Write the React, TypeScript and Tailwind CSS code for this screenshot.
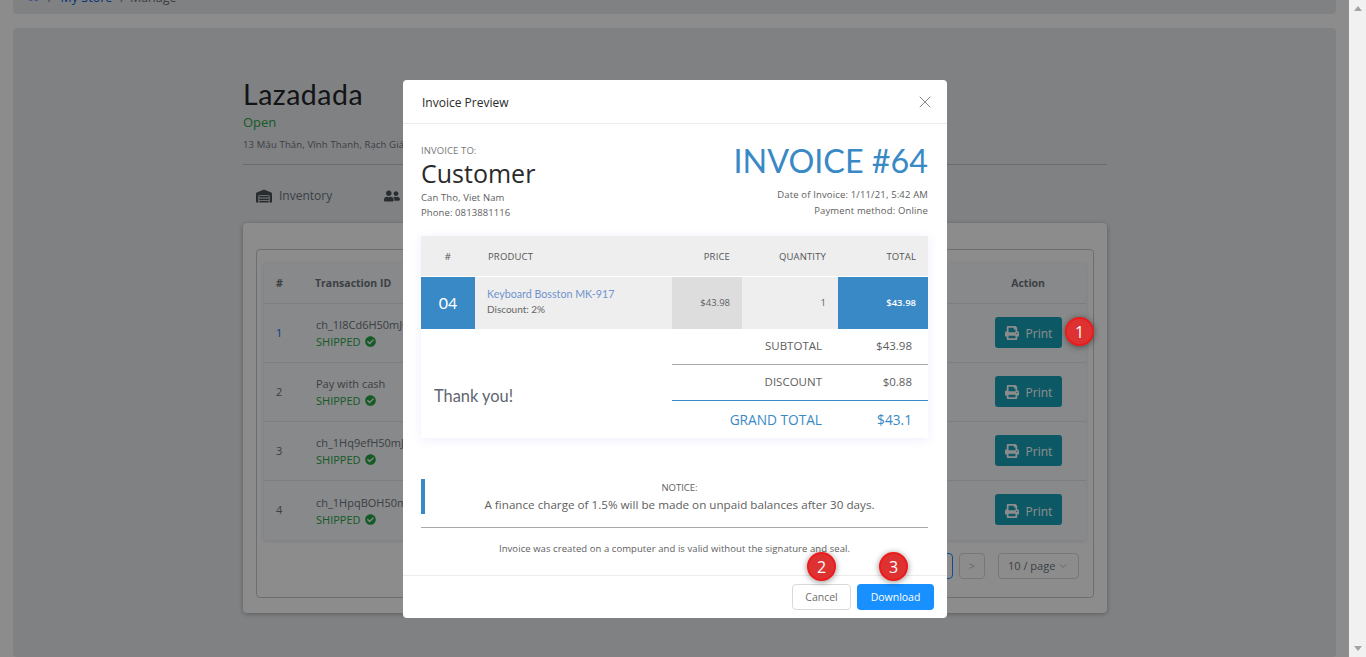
import { FaHome, FaPrint, FaUserFriends, FaWarehouse, FaCheckCircle } from 'react-icons/fa';
import { ChevronDown, X } from 'lucide-react';

const rows = [
  { id: 1, tx: 'ch_1I8Cd6H50mJ0', link: true },
  { id: 2, tx: 'Pay with cash', link: false },
  { id: 3, tx: 'ch_1Hq9efH50mJ0', link: false },
  { id: 4, tx: 'ch_1HpqBOH50mJ0', link: false },
];

function Marker({ n, className }: { n: number; className: string }) {
  return (
    <div
      className={`absolute z-30 flex h-[29px] w-[29px] items-center justify-center rounded-full border-2 border-[#ec1c1c] bg-[#de3232] font-['Open_Sans',sans-serif] text-base text-white shadow-[0_1px_6px_rgba(0,0,0,0.45)] ${className}`}
    >
      {n}
    </div>
  );
}

function StorePage() {
  return (
    <div className="flex h-full flex-col gap-[14px] overflow-hidden bg-white px-[13px]">
      <div className="-mt-[6px] flex h-[20px] shrink-0 items-end gap-[8px] rounded bg-[#e9ecef] pb-[6px] pl-[14px] text-[12.5px] text-[#0b5ed7]">
        <FaHome className="mb-[6px] text-[13px]" />
        <span className="text-[#6c757d]">/</span>
        <span>My Store</span>
        <span className="text-[#6c757d]">/</span>
        <span className="-ml-[3px] text-[#6c757d]">Manage</span>
      </div>

      <div className="flex-1 rounded bg-[#e9ecef] pl-[230px] pr-[229px] pt-[50px]">
        <h1 className="font-['Lato',sans-serif] text-[28.5px] leading-[32px] tracking-[0.5px] text-[#212529]">Lazadada</h1>
        <p className="mt-[3px] text-[13px] leading-[18px] text-[#28a745]">Open</p>
        <p className="mt-[7px] border-b border-[#c6c6c6] pb-[12px] text-[9.5px] leading-[14px] tracking-[0.15px] text-[#6c757d]">
          13 Mậu Thân, Vĩnh Thanh, Rạch Giá, Kiên Giang
        </p>

        <div className="flex h-[58px] items-center gap-[52px] pl-[13px] pt-[3px] text-[12px] text-[#6c757d]">
          <span className="flex items-center gap-[7px]">
            <FaWarehouse className="text-[16px] text-[#495057]" />
            Inventory
          </span>
          <span className="flex items-center gap-[7px]">
            <FaUserFriends className="text-[16px] text-[#495057]" />
            Staffs
          </span>
        </div>

        <div className="h-[390px] rounded-sm bg-white p-[13px] pt-[26px] shadow-[0_1px_5px_rgba(0,0,0,0.3)]">
          <div className="h-[349px] rounded-sm border border-[#c9c9c9] px-[7px] pt-[13px]">
            <div className="bg-[#f8f9fc] shadow-[0_1px_4px_rgba(60,60,160,0.15)]">
              <div className="flex h-[41px] items-center border-b border-[#e3e6f0] pl-[12px] pr-[41px] pt-[2px] text-[10.5px] font-bold text-[#6c757d]">
                <span className="w-[39px]">#</span>
                <span className="flex-1">Transaction ID</span>
                <span>Action</span>
              </div>
              {rows.map((row) => (
                <div
                  key={row.id}
                  className="flex h-[59px] items-center border-b border-[#e3e6f0] pl-[12px] pr-[24px] text-[11px] text-[#6c757d] last:border-b-0"
                >
                  <span className={`w-[40px] ${row.link ? 'text-[#0d6efd]' : ''}`}>{row.id}</span>
                  <div className="flex-1">
                    <p className="leading-[17px]">{row.tx}</p>
                    <p className="flex items-center gap-1 leading-[17px] text-[#28a745]">
                      SHIPPED <FaCheckCircle className="text-[11px]" />
                    </p>
                  </div>
                  <button className="mb-[2px] flex h-[31px] w-[67px] items-center justify-center gap-[7px] rounded-[3px] bg-[#17a2b8] pt-[4px] text-[12px] text-white">
                    <FaPrint className="-mt-[2px] text-[14px]" />
                    Print
                  </button>
                </div>
              ))}
            </div>
            <div className="mt-[13px] flex items-center justify-end gap-[6px] pr-[7px] text-[11px] text-[#6c757d]">
              <span className="h-[26px] w-[26px] rounded-sm border border-[#1890ff]" />
              <span className="flex h-[26px] w-[26px] items-center justify-center rounded-sm border border-[#d9d9d9] text-[#bfbfbf]">
                &gt;
              </span>
              <span className="ml-[7px] flex h-[26px] w-[81px] items-center justify-between rounded-sm border border-[#d9d9d9] px-[9px]">
                10 / page
                <ChevronDown size={12} className="text-[#bfbfbf]" />
              </span>
            </div>
          </div>
        </div>
      </div>
    </div>
  );
}

function InvoiceModal() {
  return (
    <div className="absolute left-[403px] top-[80px] z-20 flex h-[538px] w-[544px] flex-col rounded-sm bg-white text-[#5e5e5e]">
      <div className="flex h-[44px] shrink-0 items-center justify-between border-b border-[#ececec] pl-[19px] pr-[12px]">
        <span className="pt-[2px] text-[12px] font-medium text-[#2a2a2a]">Invoice Preview</span>
        <X size={20} strokeWidth={1.2} className="text-[#8c8c8c]" />
      </div>

      <div className="flex-1 pl-[18px] pr-[19px]">
        <div className="flex h-[112px] justify-between pt-[20px]">
          <div>
            <p className="text-[9.5px] leading-[13px] tracking-[0.1px] text-[#777]">INVOICE TO:</p>
            <p className="-mt-px text-[25px] leading-[34px] text-[#2a2a2a]">Customer</p>
            <p className="text-[9.5px] leading-[15px] tracking-[0.1px]">Can Tho, Viet Nam</p>
            <p className="text-[9.5px] leading-[15px] tracking-[0.1px]">Phone: 0813881116</p>
          </div>
          <div className="text-right">
            <p className="-mt-[5px] font-['Lato',sans-serif] text-[32.3px] leading-[44px] text-[#3989c6]">INVOICE #64</p>
            <p className="mt-[3px] text-[9.5px] leading-[17px] tracking-[0.15px]">Date of Invoice: 1/11/21, 5:42 AM</p>
            <p className="text-[9.5px] leading-[16px] tracking-[0.15px]">Payment method: Online</p>
          </div>
        </div>

        <div className="shadow-[0_2px_10px_rgba(90,90,240,0.1)]">
          <div className="flex h-[40px] items-center bg-[#eeeeee] pt-[3px] text-[9.5px] tracking-[0.15px] text-[#555]">
            <span className="w-[54px] text-center">#</span>
            <span className="w-[197px] pl-[13px]">PRODUCT</span>
            <span className="w-[70px] pr-[12px] text-right">PRICE</span>
            <span className="w-[96px] pr-[12px] text-right">QUANTITY</span>
            <span className="w-[90px] pr-[12px] text-right">TOTAL</span>
          </div>
          <div className="mt-px flex h-[52px] items-stretch bg-[#eeeeee] text-[9.5px]">
            <span className="flex w-[54px] items-center justify-center bg-[#3989c6] font-['Lato',sans-serif] text-[16px] text-white">
              04
            </span>
            <div className="flex w-[197px] flex-col justify-center pb-[3px] pl-[12px]">
              <span className="font-['Lato',sans-serif] text-[10.7px] leading-[16px] text-[#6e93cf]">Keyboard Bosston MK-917</span>
              <span className="font-['Lato',sans-serif] text-[10px] leading-[15px] text-[#666]">Discount: 2%</span>
            </div>
            <span className="flex w-[70px] items-center justify-end bg-[#dddddd] pr-[12px]">$43.98</span>
            <span className="flex w-[96px] items-center justify-end pr-[12px]">1</span>
            <span className="flex w-[90px] items-center justify-end bg-[#3989c6] pr-[12px] font-semibold text-white">$43.98</span>
          </div>
          <div className="flex h-[109px]">
            <div className="flex w-[251px] items-center pl-[13px] pt-[26px] font-['Lato',sans-serif] text-[16.4px] text-[#5e6570]">
              Thank you!
            </div>
            <div className="w-[256px] text-[11.5px]">
              <div className="flex h-[36px] items-center justify-end border-b border-[#aaaaaa] pb-px pr-[16px]">
                <span>SUBTOTAL</span>
                <span className="w-[90px] text-right">$43.98</span>
              </div>
              <div className="flex h-[36px] items-center justify-end border-b border-[#3989c6] pb-px pr-[16px]">
                <span>DISCOUNT</span>
                <span className="w-[90px] text-right">$0.88</span>
              </div>
              <div className="flex h-[37px] items-center justify-end pr-[16px] pt-[2px] text-[13.7px] text-[#3989c6]">
                <span>GRAND TOTAL</span>
                <span className="w-[90px] text-right">$43.1</span>
              </div>
            </div>
          </div>
        </div>

        <div className="mt-[41px] flex h-[35px] flex-col items-center border-l-4 border-[#3989c6] pl-[6px] pt-px">
          <p className="text-[9.5px] leading-[15px]">NOTICE:</p>
          <p className="mt-px text-[11.67px] leading-[18px]">A finance charge of 1.5% will be made on unpaid balances after 30 days.</p>
        </div>
        <div className="mt-[13px] border-t border-[#aaaaaa] pt-[14px] text-center text-[9.5px] leading-[14px] tracking-[0.07px]">
          Invoice was created on a computer and is valid without the signature and seal.
        </div>
      </div>

      <div className="flex h-[43px] shrink-0 items-start justify-end gap-[6px] border-t border-[#ececec] pr-[13px] pt-[8px] text-[10.5px]">
        <button className="h-[26px] w-[59px] rounded-sm border border-[#d9d9d9] pt-px text-[#6e6e6e]">Cancel</button>
        <button className="h-[26px] w-[77px] rounded-sm bg-[#1890ff] pt-[2px] text-white">Download</button>
      </div>
    </div>
  );
}

export default function App() {
  return (
    <div className="relative flex h-screen overflow-hidden font-['Open_Sans',sans-serif]">
      <div className="relative w-[1349px] shrink-0">
        <StorePage />
        <div className="absolute inset-0 bg-black/45" />
      </div>

      <div className="flex flex-1 flex-col items-center justify-between bg-[#f1f1f1] pb-[6px] pt-[6px]">
        <svg width="8" height="5" viewBox="0 0 8 5">
          <path d="M0 5h8L4 0z" fill="#a3a3a3" />
        </svg>
        <svg width="8" height="5" viewBox="0 0 8 5">
          <path d="M0 0h8L4 5z" fill="#a3a3a3" />
        </svg>
      </div>

      <InvoiceModal />
      <Marker n={1} className="left-[1065px] top-[317px]" />
      <Marker n={2} className="left-[807px] top-[552px]" />
      <Marker n={3} className="left-[879px] top-[552px]" />
    </div>
  );
}
